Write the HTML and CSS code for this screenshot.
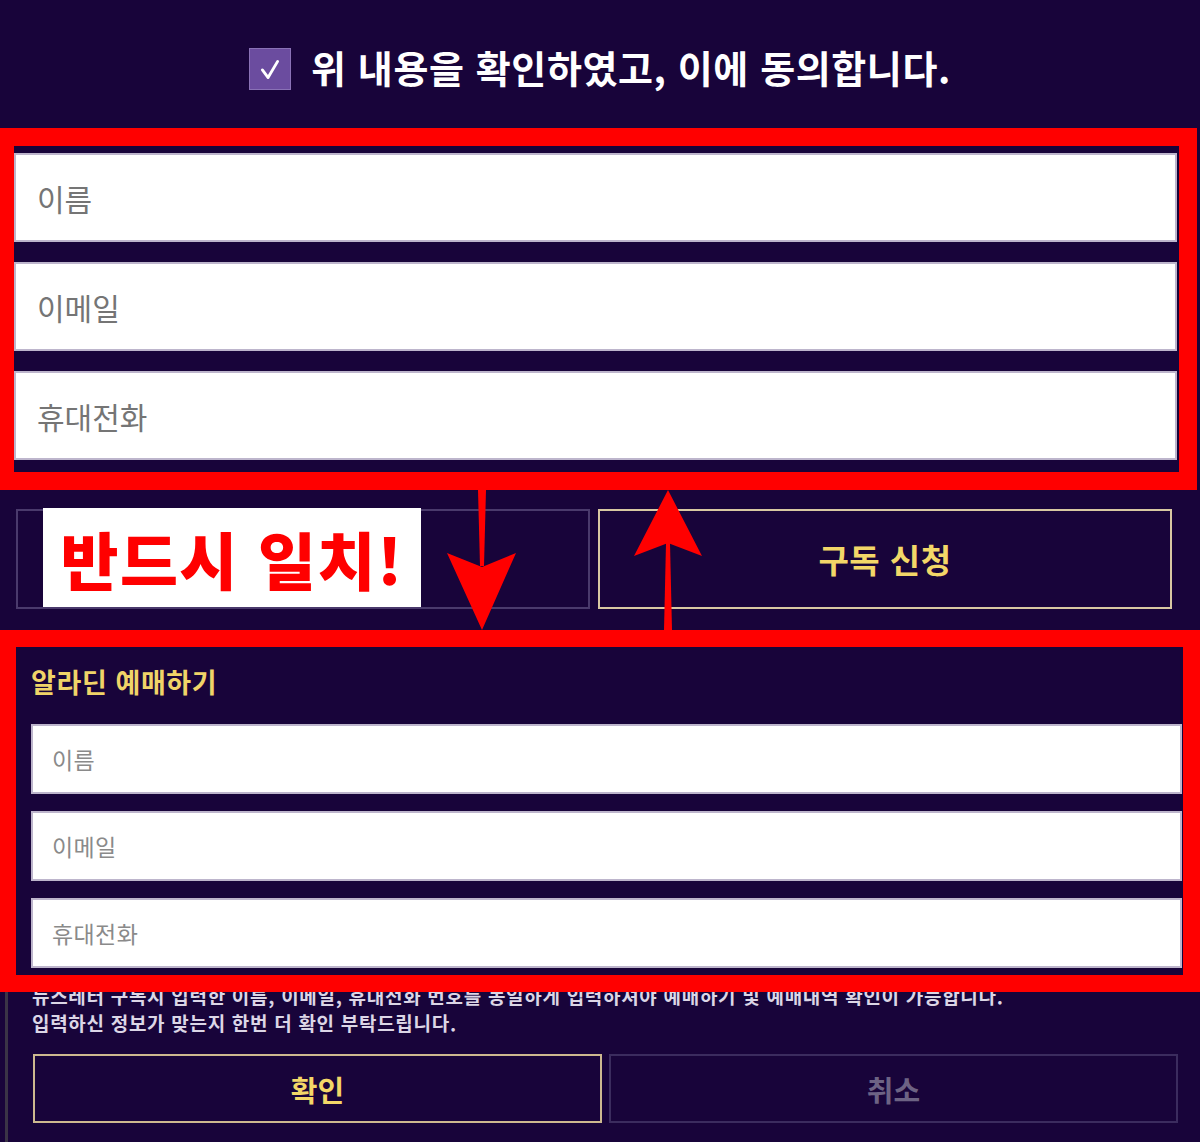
FILE: index.html
```html
<!DOCTYPE html>
<html lang="ko">
<head>
  <meta charset="UTF-8" />
  <meta name="viewport" content="width=device-width, initial-scale=1.0"/>
  <title>알라딘 예매하기</title>
  <link rel="stylesheet" href="styles.css">
</head>
<body>

  <div class="page">

    <label class="agree">
      <span class="check">
        <svg viewBox="0 0 42 42"><path d="M13 22l6 8 10-17"/></svg>
      </span>
      <span class="agree-text">위 내용을 확인하였고, 이에 동의합니다.</span>
    </label>

    <!-- 뉴스레터 구독 -->
    <div class="sub-form">
      <input class="field" type="text" placeholder="이름">
      <input class="field" type="text" placeholder="이메일">
      <input class="field" type="text" placeholder="휴대전화">
    </div>

    <div class="sub-row">
      <div class="sub-blank"></div>
      <button class="sub-btn">구독 신청</button>
    </div>

    <!-- 예매 팝업 -->
    <section class="booking">
      <h2>알라딘 예매하기</h2>
      <div class="book-form">
        <input class="book-field" type="text" placeholder="이름">
        <input class="book-field" type="text" placeholder="이메일">
        <input class="book-field" type="text" placeholder="휴대전화">
      </div>
      <p class="note">
        뉴스레터 구독시 입력한 이름, 이메일, 휴대전화 번호를 동일하게 입력하셔야 예매하기 및 예매내역 확인이 가능합니다.<br>
        입력하신 정보가 맞는지 한번 더 확인 부탁드립니다.
      </p>
      <div class="actions">
        <button class="btn-ok">확인</button>
        <button class="btn-cancel">취소</button>
      </div>
    </section>

    <!-- 주석 표시 -->
    <div class="mark mark-top"></div>
    <div class="mark mark-bottom"></div>
    <div class="mark-label">반드시 일치!</div>
    <svg class="arrows" viewBox="0 0 1200 1142">
      <polygon points="478,490 486,490 484,566 480,566"/>
      <polygon points="447,553 482,567 516,553 482,630"/>
      <polygon points="664,630 672,630 670,543 666,543"/>
      <polygon points="634,556 668,543 702,556 668,490"/>
    </svg>

  </div>

</body>
</html>
```

FILE: styles.css
```css
body {
  margin: 0;
  background: #18043a;
  font-family: "Noto Sans CJK KR", "Noto Sans", sans-serif;
  color: #fff;
}

.page {
  position: relative;
  width: 1200px;
  height: 1142px;
  overflow: hidden;
}

.agree {
  display: flex;
  justify-content: center;
  align-items: center;
  gap: 20px;
  padding-top: 48px;
  height: 42px;
}

.check {
  width: 40px;
  height: 40px;
  background: #6b4c9f;
  border: 1px solid #8a72b6;
}

.check svg {
  width: 40px;
  height: 40px;
  fill: none;
  stroke: #fff;
  stroke-width: 3;
  stroke-linecap: round;
  stroke-linejoin: round;
}

.agree-text {
  font-size: 38px;
  font-weight: bold;
  letter-spacing: 0.6px;
  margin-bottom: 5px;
}

.sub-form {
  display: flex;
  flex-direction: column;
  gap: 20px;
  margin-top: 63px;
  padding: 0 23px 0 14px;
}

.field,
.book-field {
  display: block;
  width: 100%;
  box-sizing: border-box;
  margin: 0;
  background: #fff;
  border: 2px solid #bdb5cc;
  font-family: inherit;
  outline: none;
}

.field {
  height: 89px;
  padding: 0 21px;
  font-size: 30px;
}

.field::placeholder {
  color: #757575;
}

.sub-row {
  display: grid;
  grid-template-columns: 1fr 1fr;
  gap: 8px;
  height: 100px;
  margin-top: 49px;
  padding: 0 28px 0 16px;
}

.sub-blank {
  border: 2px solid #4a3a6c;
}

.sub-btn {
  background: none;
  border: 2px solid #d8c8a2;
  color: #f3d768;
  font-family: inherit;
  font-size: 33px;
  font-weight: bold;
  letter-spacing: 0.5px;
}

.booking {
  margin: 21px 0 0 5px;
  padding: 36px 18px 0 23px;
  border-left: 3px solid #3a3446;
  height: 600px;
}

.booking h2 {
  margin: 0;
  font-size: 27px;
  line-height: 32px;
  letter-spacing: 0.6px;
  color: #f0d468;
}

.book-form {
  display: flex;
  flex-direction: column;
  gap: 17px;
  margin-top: 26px;
}

.book-field {
  height: 70px;
  padding: 0 19px;
  font-size: 23px;
  letter-spacing: 0.4px;
}

.book-field::placeholder {
  color: #8a8a8a;
}

.note {
  margin: 14px 0 0 1px;
  font-size: 19px;
  line-height: 27px;
  font-weight: bold;
  letter-spacing: 0.7px;
  color: #dcd6e6;
  white-space: nowrap;
}

.actions {
  display: grid;
  grid-template-columns: 1fr 1fr;
  gap: 7px;
  height: 69px;
  margin: 18px 4px 0 2px;
}

.actions button {
  background: none;
  font-family: inherit;
  font-size: 29px;
  font-weight: bold;
}

.btn-ok {
  border: 2px solid #cdb98f;
  color: #f3d768;
}

.btn-cancel {
  border: 2px solid #3b2c5e;
  color: #6d6384;
}

/* 빨간 주석 */
.mark {
  position: absolute;
  border: 18px solid #ff0000;
  box-sizing: border-box;
}

.mark-top {
  left: -4px;
  top: 128px;
  width: 1201px;
  height: 362px;
}

.mark-bottom {
  left: -1px;
  top: 630px;
  width: 1201px;
  height: 362px;
  border-width: 17px;
}

.mark-label {
  position: absolute;
  left: 43px;
  top: 508px;
  width: 378px;
  height: 99px;
  background: #fff;
  color: #ff0000;
  font-size: 63px;
  font-weight: 900;
  line-height: 99px;
  text-align: center;
  letter-spacing: 1.5px;
}

.arrows {
  position: absolute;
  left: 0;
  top: 0;
  width: 1200px;
  height: 1142px;
  fill: #ff0000;
  pointer-events: none;
}
```
